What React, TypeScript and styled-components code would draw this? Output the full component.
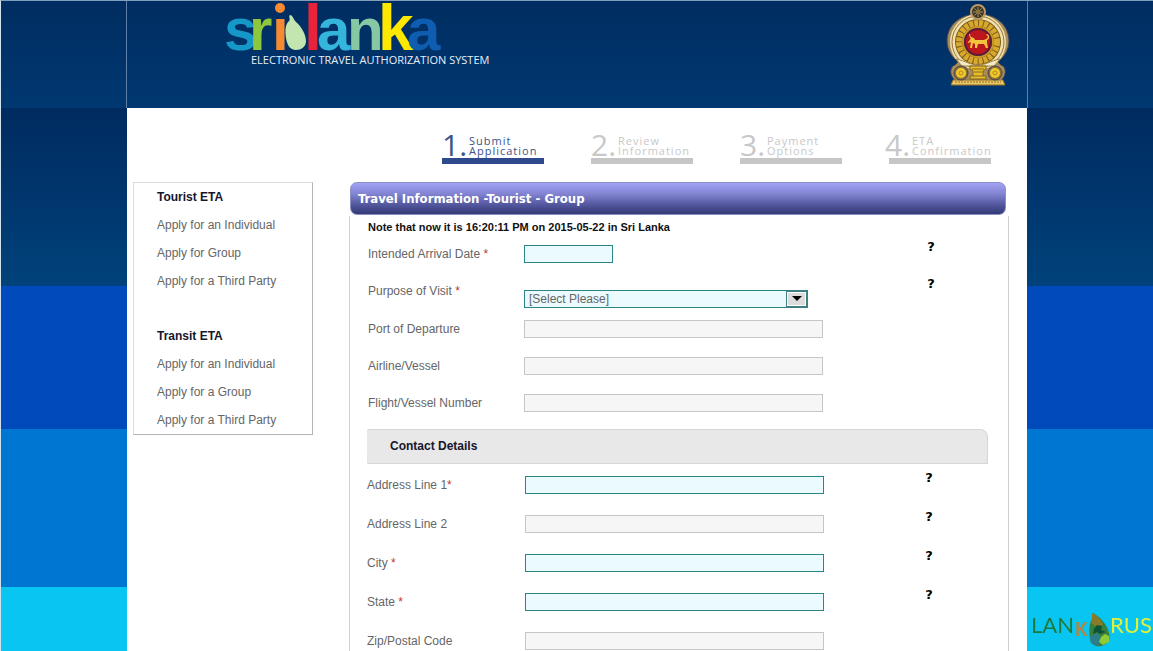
import React from "react";
import styled, { createGlobalStyle, css } from "styled-components";

const GlobalStyle = createGlobalStyle`
  *, *::before, *::after { box-sizing: border-box; }
  html { scrollbar-width: none; }
  body {
    margin: 0;
    font-family: "Liberation Sans", Arial, sans-serif;
    font-size: 12px;
    line-height: 16px;
    color: #666;
  }
  h1, h2, p, ul, ol { margin: 0; padding: 0; }
  ul, ol { list-style: none; }
`;

const Backdrop = styled.div`
  min-height: 100vh;
  border-top: 1px solid #7f9fbd;
  border-left: 1px solid #d3e3ee;
  background:
    linear-gradient(#002d61, #003871) 0 0 / 100% 107px no-repeat,
    linear-gradient(#002b60, #00427b) 0 107px / 100% 178px no-repeat,
    linear-gradient(#004abb, #004abb) 0 285px / 100% 143px no-repeat,
    linear-gradient(#0076d3, #0076d3) 0 428px / 100% 158px no-repeat,
    #09c5f2;
`;

const Page = styled.div`
  max-width: 902px;
  min-height: calc(100vh - 1px);
  margin: 0 auto;
  display: flex;
  flex-direction: column;
`;

const Header = styled.header`
  display: flex;
  justify-content: space-between;
  align-items: flex-start;
  height: 107px;
  padding: 0 17px 0 94px;
  border: solid #5e7fa8;
  border-width: 0 1px;
`;

const Content = styled.div`
  flex: 1;
  margin: 0 1px;
  padding: 24px 18px 0 6px;
  background: #fff;
`;

const Steps = styled.ol`
  display: flex;
  justify-content: flex-end;
  gap: 47px;
  padding-right: 18px;
`;

const Step = styled.li<{ $active?: boolean }>`
  display: flex;
  gap: 4px;
  width: 102px;
  height: 32px;
  border-bottom: 6px solid ${(p) => (p.$active ? "#2f4a8c" : "#c6c6c6")};
  color: ${(p) => (p.$active ? "#3b5488" : "#c8c8c8")};
  white-space: nowrap;

  &:last-child > :first-child {
    margin-left: -4px;
  }
`;

const StepNumber = styled.span`
  display: flex;
  justify-content: space-between;
  width: 23px;
  font: 30px/26px "Open Sans", sans-serif;
`;

const StepLabel = styled.span`
  padding-top: 4px;
  font: 11px/10px "Open Sans", sans-serif;
  letter-spacing: 1px;
`;

const Columns = styled.div`
  display: grid;
  grid-template-columns: 180px minmax(0, 1fr);
  gap: 36px;
  align-items: start;
  padding-top: 18px;
`;

const Sidebar = styled.nav`
  display: grid;
  gap: 27px;
  padding-left: 23px;
  border: 1px solid #dcdcdc;
  border-right-color: #b4b4b4;
  border-bottom-color: #b4b4b4;
  line-height: 28px;
`;

const MenuTitle = styled.h2`
  font-size: 12px;
  line-height: 28px;
  color: #16162c;
`;

const MenuLink = styled.a`
  display: block;
  color: #666;
  text-decoration: none;
`;

const PanelTitle = styled.h1`
  height: 33px;
  margin: 0 3px 0 1px;
  padding-left: 7px;
  border: 1px solid #8d90c8;
  border-radius: 7px;
  background: linear-gradient(#a2a3f5, #8284d2 35%, #4d5196 75%, #343a76);
  color: #fff;
  font: bold 13px/31px "DejaVu Sans Condensed", "DejaVu Sans", sans-serif;
`;

const PanelBody = styled.form`
  margin-top: 1px;
  border: solid #cfcfcf;
  border-width: 0 1px;
`;

const Note = styled.p`
  padding: 3px 18px;
  font-size: 11px;
  font-weight: bold;
  color: #111;
`;

const Row = styled.div<{ $contact?: boolean; $tall?: boolean }>`
  display: grid;
  align-items: start;
  ${(p) =>
    p.$contact
      ? css`
          grid-template-columns: 158px minmax(0, 397px) auto;
          height: 39px;
          padding-left: 17px;
        `
      : css`
          grid-template-columns: 156px minmax(0, 400px) auto;
          height: ${p.$tall ? 38 : 37}px;
          padding-left: 18px;
        `}
`;

const Label = styled.label`
  padding-top: 8px;
`;

const Required = styled.span`
  color: #c0392f;
`;

const control = css<{ $required?: boolean }>`
  height: 18px;
  border: 1px solid ${(p) => (p.$required ? "#2a8585" : "#c6c6c6")};
  border-radius: 0;
  background: ${(p) => (p.$required ? "#eafaff" : "#f6f6f6")};
  color: #666;
  font: 12px/16px "Liberation Sans", Arial, sans-serif;
  outline: none;
`;

const TextInput = styled.input<{ $required?: boolean; $short?: boolean }>`
  ${control}
  width: ${(p) => (p.$short ? "89px" : "299px")};
  max-width: 100%;
  margin-top: 7px;
  padding: 0 4px;
`;

const SelectBox = styled.div`
  position: relative;
  width: 284px;
  max-width: 100%;
  height: 18px;
  margin-top: 15px;
`;

const Select = styled.select<{ $required?: boolean }>`
  ${control}
  display: block;
  appearance: none;
  width: 100%;
  padding: 0 24px 0 4px;
`;

const Arrow = styled.svg`
  position: absolute;
  top: 0;
  right: 0;
  pointer-events: none;
`;

const Help = styled.button`
  width: 14px;
  height: 18px;
  padding: 0;
  border: 0;
  background: none;
  color: #000;
  font: bold 13px/18px "DejaVu Sans", sans-serif;
  cursor: pointer;
`;

const SectionTitle = styled.h2`
  height: 35px;
  margin: 5px 20px 5px 17px;
  padding-left: 22px;
  border: 1px solid #d6d6d6;
  border-left-color: #e8e8e8;
  border-radius: 0 8px 0 0;
  background: #e8e8e8;
  color: #16162c;
  font-size: 12px;
  line-height: 32px;
`;

const Logo = styled.svg`
  overflow: visible;
`;

const Watermark = styled.svg`
  position: fixed;
  right: 0;
  bottom: 4px;
`;

const brandLetters = [
  { x: 13, ch: "s", fill: "#1598c8" },
  { x: 38, ch: "r", fill: "#8fc63f" },
  { x: 61, ch: "ı", fill: "#f58a33" },
  { x: 93, ch: "l", fill: "#e8233a", size: 64 },
  { x: 106, ch: "a", fill: "#35b4dc" },
  { x: 136, ch: "n", fill: "#86c8a4" },
  { x: 167, ch: "k", fill: "#ffe800", size: 64 },
  { x: 196, ch: "a", fill: "#0f5db0" },
];

function BrandLogo() {
  return (
    <Logo width="290" height="72" viewBox="10 1 290 72" role="img" aria-label="Sri Lanka">
      <g fontFamily="'Liberation Sans', sans-serif" fontWeight="bold">
        {brandLetters.map((l, i) => (
          <text key={i} x={l.x} y="50" fill={l.fill} fontSize={l.size ?? 60}>{l.ch}</text>
        ))}
      </g>
      <circle cx="69" cy="8" r="5" fill="#f58a33" />
      <path
        d="M79 15c3 0 3 4 6 7 6 5 10 13 10 19 0 6-5 9-10 9-6 0-9-5-10-12-1-7-1-13 3-17 2-2-1-4 1-6z"
        fill="#c3e6b0"
      />
      <text x="40" y="64" fill="#e6eefa" fontSize="11" fontFamily="'Open Sans', sans-serif">
        ELECTRONIC TRAVEL AUTHORIZATION SYSTEM
      </text>
    </Logo>
  );
}

function Emblem() {
  const rays = Array.from({ length: 8 }, (_, i) => (i * Math.PI) / 4);
  return (
    <svg width="64" height="86" viewBox="0 0 64 86" role="img" aria-label="Emblem">
      <path
        d="M32 13c19 0 31 12 31 27 0 9-5 16-11 21l3 3c5 1 6 10 1 14l3 6H5l3-6c-5-4-4-13 1-14l3-3C6 56 1 49 1 40c0-15 12-27 31-27z"
        fill="#a98d58" stroke="#3d4458" strokeWidth="1"
      />
      <circle cx="32" cy="41" r="28" fill="#efe0b0" />
      <circle cx="32" cy="41" r="26" fill="none" stroke="#9a7430" strokeWidth="1" />
      <circle cx="32" cy="41" r="23" fill="#7b5c1c" />
      <circle cx="32" cy="41" r="19" fill="none" stroke="#d9a92e" strokeWidth="6" strokeDasharray="4 1" />
      <circle cx="32" cy="41" r="15" fill="none" stroke="#c99726" strokeWidth="2" />
      <circle cx="32" cy="41" r="13" fill="#bd171d" stroke="#5c1b3b" strokeWidth="2" />
      <path
        d="M24 39l1-3 3 1 1 2h9l2-1c3-1 2-4 0-4l1-1c3 1 3 5 0 6v3l1 5h-2l-2-4h-6l-1 4h-2v-4l-2-1-1 5h-2l1-6-3 1v-1zM24 37l-1-4h1l1 4z"
        fill="#f0c53c"
      />
      <circle cx="32" cy="11" r="7" fill="#3b3428" stroke="#b99a62" strokeWidth="2" />
      {rays.map((a, i) => (
        <path key={i} d={`M32 11L${32 + 5 * Math.cos(a)} ${11 + 5 * Math.sin(a)}`} stroke="#a8925e" strokeWidth="1" />
      ))}
      <circle cx="32" cy="11" r="2" fill="#8a7038" />
      <path d="M10 58c10 2 14 6 22 6s12-4 22-6l-6 7H16z" fill="#f2ebc8" stroke="#a5843e" />
      <path d="M24 65h16v3l-3 2v5h3v3H24v-3h3v-5l-3-2z" fill="#e5bd2d" stroke="#80631d" />
      <path d="M26 68h12M28 71h8M27 75h10" stroke="#8b691d" strokeWidth="1" />
      <path d="M7 79h50l2 5H5z" fill="#e8c765" stroke="#8b6b2c" strokeWidth="1" />
      <path d="M9 81h46" stroke="#9c6e1b" strokeWidth="1" strokeDasharray="2 1" />
      {[15, 49].map((cx) => (
        <g key={cx}>
          <circle cx={cx} cy="72" r="7" fill="#8f7331" stroke="#45405a" strokeWidth="1" />
          <circle cx={cx} cy="72" r="5" fill="#f0c92c" />
          <circle cx={cx} cy="72" r="2" fill="none" stroke="#b58617" strokeWidth="1" />
        </g>
      ))}
    </svg>
  );
}

function LankarusMark() {
  return (
    <Watermark width="122" height="34" viewBox="0 0 122 34" role="img" aria-label="Lankarus">
      <g fontFamily="Lato, sans-serif" fontSize="22">
        <text x="0" y="20" fill="#1e7a3a">LAN</text>
        <text x="44" y="23" fill="#b8833c" fontSize="18" fontWeight="bold">K</text>
        <text x="79" y="20" fill="#e2f03a">RUS</text>
      </g>
      <path d="M62 0l3 2 4 3c5 5 8 10 9 15 2 7-2 12-8 13-5 1-10-1-11-7-1-7-1-15 2-20z" fill="#3b7f3c" />
      <path d="M61 0l5 3c3 3 5 6 6 9l-6 2-6-4 1-5z" fill="#8a7a2a" />
      <path d="M59 23l7-3 4 5-2 7c-5 1-8-1-9-5z" fill="#2a7f8a" />
      <path d="M66 12l5 1-1 4 5 2-6 2-3-2-4 2 1-5z" fill="#0c5534" />
      <path d="M70 24l4-3 4 2v6l-6 3-4-3z" fill="#8dcc35" />
    </Watermark>
  );
}

const steps = [
  ["Submit", "Application"],
  ["Review", "Information"],
  ["Payment", "Options"],
  ["ETA", "Confirmation"],
];

const menus = [
  { title: "Tourist ETA", items: ["Apply for an Individual", "Apply for Group", "Apply for a Third Party"] },
  { title: "Transit ETA", items: ["Apply for an Individual", "Apply for a Group", "Apply for a Third Party"] },
];

const travelFields = [
  { id: "port", label: "Port of Departure" },
  { id: "airline", label: "Airline/Vessel" },
  { id: "flight", label: "Flight/Vessel Number" },
];

const contactFields = [
  { id: "address1", label: "Address Line 1", required: true, help: true },
  { id: "address2", label: "Address Line 2", help: true },
  { id: "city", label: "City ", required: true, help: true },
  { id: "state", label: "State ", required: true, help: true },
  { id: "zip", label: "Zip/Postal Code" },
];

export default function App() {
  return (
    <Backdrop>
      <GlobalStyle />
      <Page>
        <Header>
          <BrandLogo />
          <Emblem />
        </Header>
        <Content>
          <Steps>
            {steps.map(([a, b], i) => (
              <Step key={a} $active={i === 0}>
                <StepNumber><span>{i + 1}</span><span>.</span></StepNumber>
                <StepLabel>{a}<br />{b}</StepLabel>
              </Step>
            ))}
          </Steps>
          <Columns>
            <Sidebar>
              {menus.map((m) => (
                <div key={m.title}>
                  <MenuTitle>{m.title}</MenuTitle>
                  <ul>
                    {m.items.map((item) => (
                      <li key={item}><MenuLink href="#">{item}</MenuLink></li>
                    ))}
                  </ul>
                </div>
              ))}
            </Sidebar>
            <main>
              <PanelTitle>Travel Information -Tourist - Group</PanelTitle>
              <PanelBody>
                <Note>Note that now it is 16:20:11 PM on 2015-05-22 in Sri Lanka</Note>
                <Row>
                  <Label htmlFor="arrival">Intended Arrival Date <Required>*</Required></Label>
                  <TextInput id="arrival" $required $short />
                  <Help type="button">?</Help>
                </Row>
                <Row $tall>
                  <Label htmlFor="purpose">Purpose of Visit <Required>*</Required></Label>
                  <SelectBox>
                    <Select id="purpose" $required>
                      <option>[Select Please]</option>
                    </Select>
                    <Arrow width="22" height="18" viewBox="0 0 22 18">
                      <rect width="22" height="18" fill="#3d7f82" />
                      <rect x="1" y="2" width="19" height="14" fill="#fff" />
                      <rect x="2" y="3" width="17" height="12" fill="#dcdcdc" />
                      <path d="M6 6h10l-5 5z" fill="#000" />
                    </Arrow>
                  </SelectBox>
                  <Help type="button">?</Help>
                </Row>
                {travelFields.map((f) => (
                  <Row key={f.id}>
                    <Label htmlFor={f.id}>{f.label}</Label>
                    <TextInput id={f.id} />
                  </Row>
                ))}
                <SectionTitle>Contact Details</SectionTitle>
                {contactFields.map((f) => (
                  <Row key={f.id} $contact>
                    <Label htmlFor={f.id}>{f.label}{f.required && <Required>*</Required>}</Label>
                    <TextInput id={f.id} $required={f.required} />
                    {f.help && <Help type="button">?</Help>}
                  </Row>
                ))}
              </PanelBody>
            </main>
          </Columns>
        </Content>
      </Page>
      <LankarusMark />
    </Backdrop>
  );
}
